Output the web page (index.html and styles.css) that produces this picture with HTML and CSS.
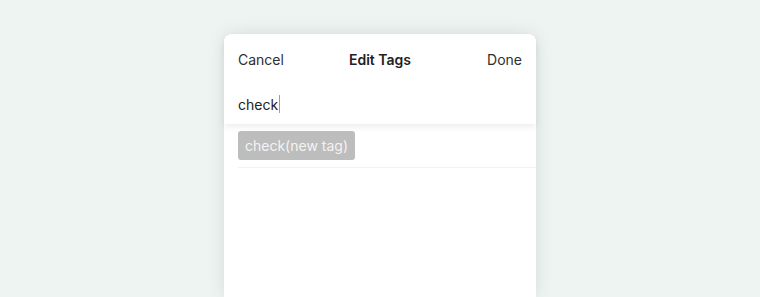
FILE: index.html
```html
<!DOCTYPE html>
<html lang="en">
<head>
    <meta charset="UTF-8">
    <link rel="stylesheet" href="styles.css">
    <title>Edit Tags</title>
</head>
<body>
    <div class="sheet">
        <div class="sheet-top">
            <div class="header">
                <span class="header-btn">Cancel</span>
                <span class="header-title">Edit Tags</span>
                <span class="header-btn done">Done</span>
            </div>
            <div class="input-row">
                <span class="input-text">check</span><span class="caret"></span>
            </div>
        </div>
        <div class="suggestions">
            <div class="suggestion">
                <span class="chip">check(new tag)</span>
            </div>
        </div>
    </div>
</body>
</html>
```

FILE: styles.css
```css
body {
    margin: 0;
    background: #eef4f1;
    font-family: 'Inter', sans-serif;
    display: flex;
    justify-content: center;
    height: 297px;
    overflow: hidden;
}
.sheet {
    margin-top: 34px;
    width: 312px;
    background: #fff;
    border-radius: 8px 8px 0 0;
    box-shadow: 0 0 18px rgba(0, 0, 0, 0.1);
    display: flex;
    flex-direction: column;
}
.sheet-top {
    border-radius: 8px 8px 0 0;
    box-shadow: 0 3px 6px rgba(0, 0, 0, 0.07);
    position: relative;
    z-index: 1;
    background: #fff;
}
.header {
    display: grid;
    grid-template-columns: 1fr auto 1fr;
    align-items: center;
    padding: 0 14px;
    height: 50px;
}
.header-btn {
    font-size: 14px;
    color: #2e2e2e;
}
.done {
    text-align: right;
}
.header-title {
    font-size: 14px;
    font-weight: 600;
    color: #222;
}
.input-row {
    display: flex;
    align-items: center;
    padding: 0 14px;
    height: 40px;
}
.input-text {
    font-size: 14px;
    color: #222;
}
.caret {
    width: 1px;
    height: 18px;
    margin-left: 1px;
    background: #4cc2b2;
}
.suggestions {
    padding-left: 14px;
    height: 173px;
}
.suggestion {
    padding: 7px 0;
    border-bottom: 1px solid #f2f2f2;
}
.chip {
    display: inline-block;
    background: #bdbdbd;
    color: #f3f3f3;
    font-size: 14px;
    line-height: 17px;
    padding: 6px 7px;
    border-radius: 3px;
}
```
